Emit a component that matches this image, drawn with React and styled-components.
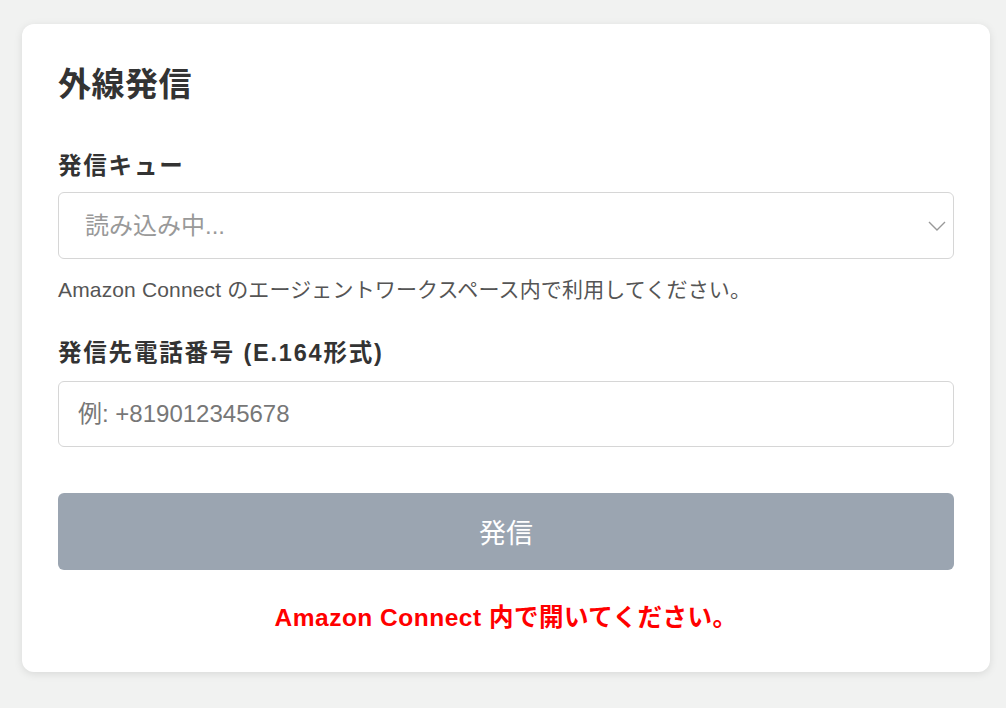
import React from 'react';
import styled, { createGlobalStyle } from 'styled-components';

const GlobalStyle = createGlobalStyle`
  html, body {
    margin: 0;
    padding: 0;
    background: #f1f2f1;
  }
  body {
    font-family: "Liberation Sans", "Noto Sans CJK JP", sans-serif;
    color: #333;
  }
`;

const Page = styled.div`
  padding: 24px 16px 24px 22px;
`;

const Card = styled.div`
  background: #fff;
  border-radius: 12px;
  box-shadow: 0 2px 8px rgba(0, 0, 0, 0.1);
  padding: 36px 36px 37px;
  display: flex;
  flex-direction: column;
`;

const Title = styled.h2`
  margin: 0;
  font-size: 33px;
  line-height: 50px;
  font-weight: 700;
  letter-spacing: 0.5px;
  color: #333;
`;

const Field = styled.div`
  margin-top: ${(p) => p.$top}px;
  display: flex;
  flex-direction: column;
`;

const Label = styled.label`
  font-size: 23.5px;
  line-height: 30px;
  font-weight: 700;
  letter-spacing: 1.8px;
  color: #333;
  margin-bottom: ${(p) => p.$gap}px;
`;

const SelectWrap = styled.div`
  position: relative;
`;

const Select = styled.select`
  appearance: none;
  width: 100%;
  height: 67px;
  box-sizing: border-box;
  border: 1px solid #d6d6d6;
  border-radius: 6px;
  background: #fff;
  padding: 0 40px 0 26px;
  font-family: inherit;
  font-size: 24px;
  color: #999;
  outline: none;
  opacity: 1;
  &:disabled {
    color: #999;
    opacity: 1;
    background: #fff;
  }
`;

const Chevron = styled.svg`
  position: absolute;
  right: 8px;
  top: 50%;
  transform: translateY(-50%);
  pointer-events: none;
`;

const Help = styled.p`
  margin: 16px 0 0;
  font-size: 21px;
  line-height: 30px;
  letter-spacing: 0.15px;
  color: #555;
`;

const Input = styled.input`
  width: 100%;
  height: 66px;
  box-sizing: border-box;
  border: 1px solid #d6d6d6;
  border-radius: 6px;
  padding: 0 19px;
  font-family: inherit;
  font-size: 24px;
  color: #333;
  outline: none;
  &::placeholder {
    color: #777;
  }
`;

const Button = styled.button`
  margin-top: 46px;
  height: 77px;
  border: none;
  border-radius: 6px;
  background: #9ba5b1;
  color: #fff;
  font-family: inherit;
  font-size: 27px;
  cursor: not-allowed;
`;

const ErrorText = styled.p`
  margin: 31px 0 0;
  text-align: center;
  font-size: 24.5px;
  line-height: 34px;
  font-weight: 700;
  letter-spacing: 0.5px;
  color: #ff0000;
`;

export default function App() {
  return (
    <>
      <GlobalStyle />
      <Page>
        <Card>
          <Title>外線発信</Title>
          <Field $top={41}>
            <Label $gap={11}>発信キュー</Label>
            <SelectWrap>
              <Select disabled defaultValue="">
                <option value="">読み込み中...</option>
              </Select>
              <Chevron width="18" height="10" viewBox="0 0 18 10" fill="none">
                <path d="M1 1l8 8 8-8" stroke="#999" strokeWidth="1.4" />
              </Chevron>
            </SelectWrap>
          </Field>
          <Help>Amazon Connect のエージェントワークスペース内で利用してください。</Help>
          <Field $top={33}>
            <Label $gap={13}>発信先電話番号 (E.164形式)</Label>
            <Input type="tel" placeholder="例: +819012345678" />
          </Field>
          <Button disabled>発信</Button>
          <ErrorText>Amazon Connect 内で開いてください。</ErrorText>
        </Card>
      </Page>
    </>
  );
}
